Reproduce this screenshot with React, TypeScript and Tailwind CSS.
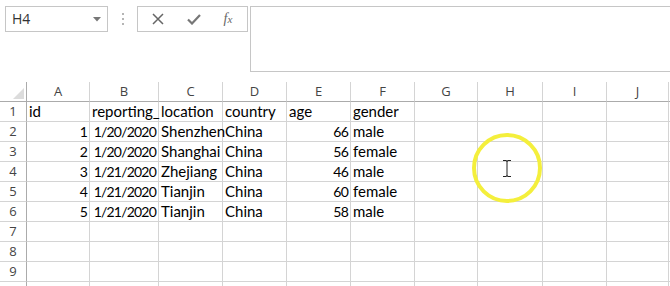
import React from 'react';

const COLS = [
  { key: 'A', w: 'w-[63px]' },
  { key: 'B', w: 'w-[69px]' },
  { key: 'C', w: 'w-[64px]' },
  { key: 'D', w: 'w-[64px]' },
  { key: 'E', w: 'w-[64px]' },
  { key: 'F', w: 'w-[64px]' },
  { key: 'G', w: 'w-[63px]' },
  { key: 'H', w: 'w-[65px]' },
  { key: 'I', w: 'w-[64px]' },
  { key: 'J', w: 'w-[62px]' },
];

type Cell = { v: string; num?: boolean };

const DATA: Cell[][] = [
  [{ v: 'id' }, { v: 'reporting_' }, { v: 'location' }, { v: 'country' }, { v: 'age' }, { v: 'gender' }],
  [{ v: '1', num: true }, { v: '1/20/2020', num: true }, { v: 'Shenzhen' }, { v: 'China' }, { v: '66', num: true }, { v: 'male' }],
  [{ v: '2', num: true }, { v: '1/20/2020', num: true }, { v: 'Shanghai' }, { v: 'China' }, { v: '56', num: true }, { v: 'female' }],
  [{ v: '3', num: true }, { v: '1/21/2020', num: true }, { v: 'Zhejiang' }, { v: 'China' }, { v: '46', num: true }, { v: 'male' }],
  [{ v: '4', num: true }, { v: '1/21/2020', num: true }, { v: 'Tianjin' }, { v: 'China' }, { v: '60', num: true }, { v: 'female' }],
  [{ v: '5', num: true }, { v: '1/21/2020', num: true }, { v: 'Tianjin' }, { v: 'China' }, { v: '58', num: true }, { v: 'male' }],
  [],
  [],
  [],
  [],
];

const cellFont = { fontFamily: 'Lato, "Open Sans", sans-serif' };
const uiFont = { fontFamily: '"Open Sans", "Noto Sans", sans-serif' };

const FormulaBar = () => (
  <div className="flex h-[72px] pt-[6px] bg-white">
    <div className="ml-[5px] w-[103px] h-[26px] border border-[#c6c6c6] flex items-center justify-between pl-[6px] pr-[6px]">
      <span className="text-[14px] text-[#333] leading-none" style={uiFont}>
        H4
      </span>
      <svg width="8" height="5" viewBox="0 0 8 5">
        <path d="M0 0 L8 0 L4 4.5 Z" fill="#777" />
      </svg>
    </div>
    <div className="w-[29px] h-[26px] flex flex-col items-center justify-center gap-[3px]">
      <span className="w-[2px] h-[2px] bg-[#b5b5b5]" />
      <span className="w-[2px] h-[2px] bg-[#b5b5b5]" />
      <span className="w-[2px] h-[2px] bg-[#b5b5b5]" />
    </div>
    <div className="w-[111px] h-[26px] border border-[#c6c6c6] flex items-center">
      <div className="w-[40px] flex justify-center">
        <svg width="12" height="12" viewBox="0 0 12 12">
          <path d="M1 1 L11 11 M11 1 L1 11" stroke="#666" strokeWidth="1.5" />
        </svg>
      </div>
      <div className="w-[31px] flex justify-center">
        <svg width="14" height="11" viewBox="0 0 14 11">
          <path d="M1 5.5 L5 9.5 L13 1" stroke="#777" strokeWidth="2.2" fill="none" />
        </svg>
      </div>
      <div className="flex-1 flex justify-center">
        <span
          className="text-[14px] italic text-[#666] leading-none"
          style={{ fontFamily: '"Liberation Serif", "DejaVu Serif", serif' }}
        >
          f<span className="text-[11px]">x</span>
        </span>
      </div>
    </div>
    <div className="ml-[2px] flex-1 h-[66px] border-t border-l border-b border-[#c6c6c6]" />
  </div>
);

const HeaderRow = () => (
  <div className="flex mt-[10px] h-[20px]">
    <div className="w-[27px] h-[20px] border-r border-b border-[#ababab] relative">
      <svg className="absolute right-[2px] bottom-[2px]" width="11" height="11" viewBox="0 0 11 11">
        <path d="M11 0 L11 11 L0 11 Z" fill="#dcdcdc" />
      </svg>
    </div>
    {COLS.map((c) => (
      <div
        key={c.key}
        className={`${c.w} h-[20px] border-r border-b border-r-[#d4d4d4] border-b-[#ababab] flex items-center justify-center text-[13px] text-[#444]`}
        style={uiFont}
      >
        {c.key}
      </div>
    ))}
    <div className="flex-1 border-b border-[#ababab]" />
  </div>
);

const DataRow = ({ n, cells }: { n: number; cells: Cell[] }) => (
  <div className="flex h-[20px]">
    <div
      className="w-[27px] h-[20px] border-r border-b border-r-[#ababab] border-b-[#d4d4d4] flex items-center justify-center text-[13px] text-[#444]"
      style={uiFont}
    >
      {n < 10 ? n : ''}
    </div>
    {COLS.map((c, i) => {
      const cell = cells[i];
      return (
        <div
          key={c.key}
          className={`${c.w} h-[20px] border-r border-b border-[#d4d4d4] flex items-center px-[2px] overflow-visible whitespace-nowrap text-black ${
            cell?.num ? 'justify-end text-[14px] tracking-[-0.8px]' : 'justify-start text-[15px]'
          }`}
          style={cellFont}
        >
          {cell?.v ?? ''}
        </div>
      );
    })}
    <div className="flex-1 border-b border-[#d4d4d4]" />
  </div>
);

export default function App() {
  return (
    <div className="w-[670px] h-[286px] overflow-hidden bg-white relative">
      <FormulaBar />
      <HeaderRow />
      {DATA.map((cells, i) => (
        <DataRow key={i} n={i + 1} cells={cells} />
      ))}
      {/* click highlight circle */}
      <div className="absolute left-[472px] top-[133px] w-[70px] h-[70px] rounded-full border-[4px] border-[#f4ef3c] blur-[0.5px]" />
      <svg className="absolute left-[502px] top-[160px]" width="10" height="17" viewBox="0 0 10 17">
        <path d="M1 0.5 H4 M6 0.5 H9 M5 1 V16 M1 16.5 H4 M6 16.5 H9 M4 0.5 Q5 0.5 5 1.5 M6 0.5 Q5 0.5 5 1.5 M4 16.5 Q5 16.5 5 15.5 M6 16.5 Q5 16.5 5 15.5" stroke="#222" strokeWidth="1" fill="none" />
      </svg>
    </div>
  );
}
